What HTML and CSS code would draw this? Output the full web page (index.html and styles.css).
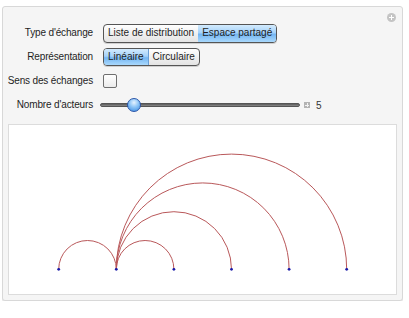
FILE: index.html
```html
<!DOCTYPE html>
<html>
<head>
<meta charset="utf-8">
<link rel="stylesheet" href="styles.css">
</head>
<body>
<div class="panel">
  <span class="corner-btn"></span>
  <div class="controls">
    <div class="label">Type d'échange</div>
    <div class="seg seg-lg">
      <span class="opt">Liste de distribution</span>
      <span class="opt on">Espace partagé</span>
    </div>
    <div class="label">Représentation</div>
    <div class="seg">
      <span class="opt on">Linéaire</span>
      <span class="opt">Circulaire</span>
    </div>
    <div class="label">Sens des échanges</div>
    <div><span class="check"></span></div>
    <div class="label">Nombre d'acteurs</div>
    <div class="slider-row">
      <div class="track"><span class="thumb"></span></div>
      <span class="plus"></span>
      <span class="value">5</span>
    </div>
  </div>
  <div class="plot">
    <svg width="388" height="169" viewBox="0 0 388 169">
      <g fill="none" stroke="#b9585a" stroke-width="1">
        <path d="M49.7 144.3 A28.8 28.8 0 0 1 107.3 144.3"/>
        <path d="M107.3 144.3 A28.8 28.8 0 0 1 164.9 144.3"/>
        <path d="M107.3 144.3 A57.6 57.6 0 0 1 222.5 144.3"/>
        <path d="M107.3 144.3 A86.4 86.4 0 0 1 280.1 144.3"/>
        <path d="M107.3 144.3 A115.2 115.2 0 0 1 337.7 144.3"/>
      </g>
      <g fill="#1a1aa8">
        <circle cx="49.7" cy="144.3" r="1.4"/>
        <circle cx="107.3" cy="144.3" r="1.4"/>
        <circle cx="164.9" cy="144.3" r="1.4"/>
        <circle cx="222.5" cy="144.3" r="1.4"/>
        <circle cx="280.1" cy="144.3" r="1.4"/>
        <circle cx="337.7" cy="144.3" r="1.4"/>
      </g>
    </svg>
  </div>
</div>
</body>
</html>
```

FILE: styles.css
```css
html, body {
  margin: 0;
  padding: 0;
  background: #ffffff;
}
body {
  padding: 6px 6px 0 2px;
  font-family: "Liberation Sans", Arial, sans-serif;
  font-size: 10px;
  color: #1e1e1e;
}
.panel {
  position: relative;
  width: 399px;
  height: 279px;
  border: 1px solid #d8d8d8;
  border-radius: 3px;
  background: #f5f5f5;
  box-shadow: 0 1px 0 #e6e6e6;
  padding-top: 14px;
  box-sizing: content-box;
}
.corner-btn {
  position: absolute;
  right: 6px;
  top: 6px;
  width: 9px;
  height: 9px;
  border-radius: 50%;
  background: #c4c4c4;
}
.corner-btn::before,
.corner-btn::after {
  content: "";
  position: absolute;
  background: #ffffff;
}
.corner-btn::before {
  left: 2px;
  top: 4px;
  width: 5px;
  height: 1px;
}
.corner-btn::after {
  left: 4px;
  top: 2px;
  width: 1px;
  height: 5px;
}
.controls {
  display: grid;
  grid-template-columns: 90px auto;
  grid-auto-rows: 24px;
  column-gap: 10px;
  align-items: center;
  justify-items: start;
}
.label {
  justify-self: end;
  line-height: 12px;
  letter-spacing: -0.15px;
}
.seg {
  display: flex;
  height: 16px;
  border: 1px solid #555;
  border-radius: 4px;
  overflow: hidden;
  background: linear-gradient(#ffffff, #f0f0f0 50%, #e4e4e4);
  box-shadow: 0 1px 0 #cfcfcf;
}
.seg-lg {
  height: 17px;
}
.opt {
  display: flex;
  align-items: center;
  padding: 0 4px 0 4px;
  line-height: 12px;
}
.opt + .opt {
  border-left: 1px solid #d0d0d0;
}
.opt.on {
  background: linear-gradient(#d3ebfd, #a5d2fa 45%, #75b6f2 55%, #a9d8fc);
  border-left: none;
}
.seg .opt.on:first-child + .opt {
  border-left: 1px solid #6a9fd6;
}
.check {
  display: block;
  width: 12px;
  height: 12px;
  border: 1px solid #6f6f6f;
  border-radius: 2px;
  background: linear-gradient(#ffffff, #ececec);
}
.slider-row {
  display: flex;
  align-items: center;
  margin-left: -3px;
}
.track {
  position: relative;
  width: 200px;
  height: 4px;
  border-radius: 2px;
  background: linear-gradient(#5a5a5a, #8a8a8a);
  border: 1px solid #555;
  box-sizing: border-box;
}
.thumb {
  position: absolute;
  left: 26px;
  top: -6px;
  width: 14px;
  height: 14px;
  border-radius: 50%;
  box-sizing: border-box;
  border: 1px solid #2b55a8;
  background: radial-gradient(circle at 50% 30%, #e6f3ff 0, #8cc4f6 45%, #3a8ae0 100%);
}
.plus {
  position: relative;
  width: 6px;
  height: 6px;
  margin-left: 4px;
  background: #b3b3b3;
}
.plus::before,
.plus::after {
  content: "";
  position: absolute;
  background: #f2f2f2;
}
.plus::before {
  left: 1px;
  top: 2.5px;
  width: 4px;
  height: 1px;
}
.plus::after {
  left: 2.5px;
  top: 1px;
  width: 1px;
  height: 4px;
}
.value {
  margin-left: 6px;
  font-size: 10px;
  color: #333;
}
.plot {
  margin: 7px 5px 0 5px;
  height: 169px;
  border: 1px solid #dcdcdc;
  background: #ffffff;
}
.plot svg {
  display: block;
}
```
